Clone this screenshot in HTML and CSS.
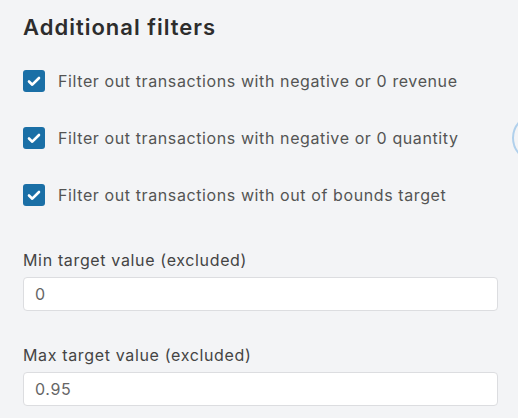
FILE: index.html
```html
<!DOCTYPE html>
<html>
<head>
<meta charset="utf-8">
<link rel="stylesheet" href="styles.css">
</head>
<body>
<div class="panel">
  <h2 class="title">Additional filters</h2>
  <div class="checks">
    <label class="check"><span class="box"><svg viewBox="0 0 22 22" width="22" height="22"><path d="M6 11.5l3.3 3.2L16 8" fill="none" stroke="#fff" stroke-width="2.6" stroke-linecap="round" stroke-linejoin="round"/></svg></span><span class="ctext">Filter out transactions with negative or 0 revenue</span></label>
    <label class="check"><span class="box"><svg viewBox="0 0 22 22" width="22" height="22"><path d="M6 11.5l3.3 3.2L16 8" fill="none" stroke="#fff" stroke-width="2.6" stroke-linecap="round" stroke-linejoin="round"/></svg></span><span class="ctext">Filter out transactions with negative or 0 quantity</span></label>
    <label class="check"><span class="box"><svg viewBox="0 0 22 22" width="22" height="22"><path d="M6 11.5l3.3 3.2L16 8" fill="none" stroke="#fff" stroke-width="2.6" stroke-linecap="round" stroke-linejoin="round"/></svg></span><span class="ctext">Filter out transactions with out of bounds target</span></label>
  </div>
  <div class="field first">
    <div class="flabel">Min target value (excluded)</div>
    <div class="input">0</div>
  </div>
  <div class="field">
    <div class="flabel">Max target value (excluded)</div>
    <div class="input">0.95</div>
  </div>
</div>
<div class="ring-clip"><div class="ring"></div></div>
</body>
</html>
```
FILE: styles.css
```css
html, body {
  margin: 0;
  padding: 0;
  background: #f3f4f6;
  width: 518px;
  height: 418px;
  overflow: hidden;
  position: relative;
  font-family: Inter, "Noto Sans", sans-serif;
}
.panel {
  padding: 10px 20px 0 23px;
  display: flex;
  flex-direction: column;
}
.title {
  margin: 0;
  font-size: 22px;
  font-weight: 600;
  letter-spacing: 1px;
  color: #2d2d2d;
  line-height: 34px;
}
.checks {
  margin-top: 26px;
  display: flex;
  flex-direction: column;
  gap: 35px;
}
.check {
  display: flex;
  align-items: center;
  gap: 13px;
  height: 22px;
}
.box {
  width: 22px;
  height: 22px;
  border-radius: 3px;
  background: #1a6fa6;
  display: flex;
  flex: none;
}
.ctext {
  font-size: 16px;
  letter-spacing: 0.6px;
  color: #545454;
}
.field {
  display: flex;
  flex-direction: column;
}
.field.first { margin-top: 45px; }
.field + .field { margin-top: 35px; }
.flabel {
  font-size: 16px;
  letter-spacing: 0.65px;
  color: #444;
  line-height: 18px;
  margin-bottom: 8px;
}
.input {
  width: 475px;
  height: 34px;
  box-sizing: border-box;
  background: #fff;
  border: 1px solid #dcdde0;
  border-radius: 4px;
  padding: 0 11px;
  display: flex;
  align-items: center;
  font-size: 16px;
  letter-spacing: 0.6px;
  color: #666;
}
.ring-clip {
  position: absolute;
  left: 511px;
  top: 112px;
  width: 7px;
  height: 56px;
  overflow: hidden;
}
.ring {
  margin: 2px 0 0 1px;
  width: 48px;
  height: 48px;
  box-sizing: border-box;
  border: 2px solid #b0d0ec;
  border-radius: 50%;
}
```
